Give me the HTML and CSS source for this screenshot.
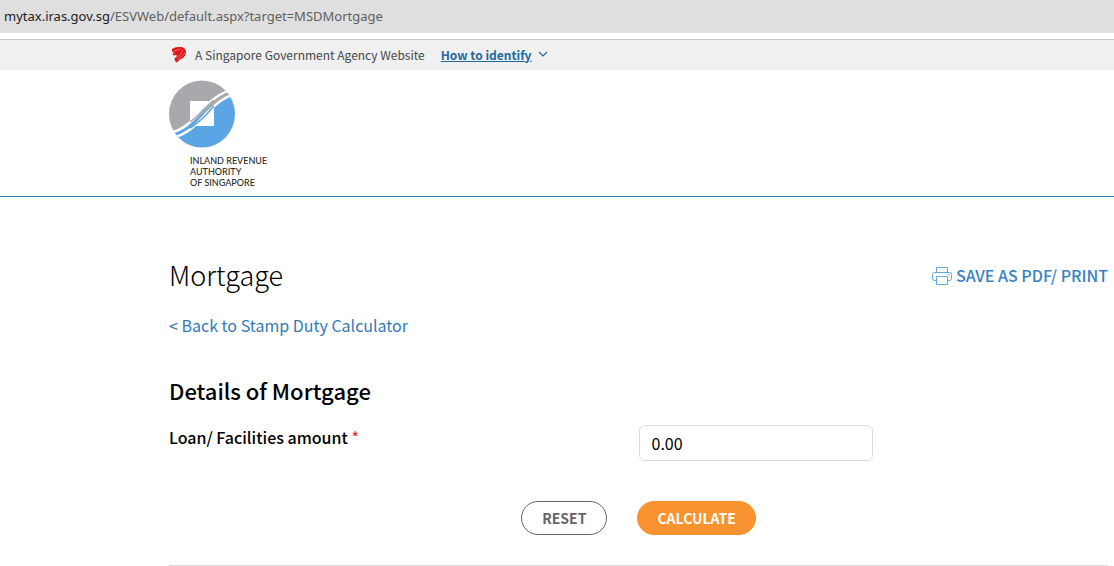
FILE: index.html
```html
<!DOCTYPE html>
<html lang="en">
<head>
<meta charset="utf-8">
<title>Mortgage</title>
<link rel="stylesheet" href="styles.css">
</head>
<body>
<div class="address"><span class="address-host">mytax.iras.gov.sg</span>/ESVWeb/default.aspx?target=MSDMortgage</div>
<div class="masthead">
  <svg class="lion" viewBox="0 0 16 18" aria-hidden="true">
    <path fill="#e3151b" d="M1 4 4 2.500 7 2 11 2 14 4 15 7 14.500 10 12 13 9 14.500 6 17.500 4 16 3.500 13.500 6 11 5 10 2.500 10.500 1.500 9 3 8 1 6.500Z"/>
    <path fill="none" stroke="#f58f8c" stroke-width=".7" d="M2.500 6.500 6 5 10 4M12 5 9.500 9 5.500 13M14 8 11 11 6.500 15"/>
  </svg>
  <span>A Singapore Government Agency Website</span>
  <a class="identify" href="#identify">How to identify</a>
  <svg class="chevron" viewBox="0 0 10 6" aria-hidden="true"><path d="M1 1 5 5 9 1" fill="none" stroke="#1f69a0" stroke-width="1.200"/></svg>
</div>
<header class="header">
  <svg class="emblem" viewBox="0 0 66 68" aria-hidden="true">
    <defs>
      <clipPath id="disc"><ellipse cx="33" cy="34" rx="33" ry="33.500"/></clipPath>
      <linearGradient id="ribbon" gradientUnits="userSpaceOnUse" x1="24" y1="44" x2="44" y2="23"><stop offset="0" stop-color="#5ba5e4"/><stop offset="1" stop-color="#a7a9ac"/></linearGradient>
    </defs>
    <g clip-path="url(#disc)">
      <path fill="#a7a9ac" d="M0 0H70V10C54 14 47 20 36 31C26 42 18 52 -2 57Z"/>
      <path fill="#5ba5e4" d="M70 10C54 14 47 20 36 31C26 42 18 52 -2 57V68H70Z"/>
      <path fill="#fff" d="M21 21H45V46H21Z"/>
      <path fill="none" stroke="#fff" stroke-width="8" d="M70 10C54 14 47 20 36 31C26 42 18 52 -2 57"/>
      <path fill="none" stroke="#a7a9ac" stroke-width="1.500" d="M21 42C27 38 30 34 34 30C38 26 41 23 45 20"/>
      <path fill="none" stroke="#5ba5e4" stroke-width="1.500" d="M21 48C28 44 32 40 37 35C40 32 42 29 45 26"/>
      <path fill="none" stroke="url(#ribbon)" stroke-width="3" d="M70 10C54 14 47 20 36 31C26 42 18 52 -2 57"/>
    </g>
  </svg>
  <div class="agency">INLAND REVENUE<br>AUTHORITY<br>OF SINGAPORE</div>
</header>
<main class="main">
  <div class="title-row">
    <h1 class="title">Mortgage</h1>
    <a class="print" href="#print">
      <svg class="printer" viewBox="0 0 20 18" aria-hidden="true"><path fill="#fff" stroke="#65a9dc" d="M4.500 5.500V.5H15.500V5.500M4.500 13.500H2.500Q.5 13.500 .5 11.500V7.500Q.5 5.500 2.500 5.500H17.500Q19.500 5.500 19.500 7.500V11.500Q19.500 13.500 17.500 13.500H15.500M4.500 9.500H15.500V17.500H4.500ZM16 7.500H17.500"/></svg>
      SAVE AS PDF/ PRINT
    </a>
  </div>
  <a class="back" href="#calculator">&lt; Back to Stamp Duty Calculator</a>
  <h2 class="section">Details of Mortgage</h2>
  <form>
    <div class="field">
      <label class="label" for="amount">Loan/ Facilities amount <span class="required">*</span></label>
      <input class="amount" id="amount" type="text" value="0.00">
    </div>
    <div class="actions">
      <button class="button reset" type="button">RESET</button>
      <button class="button calculate" type="button">CALCULATE</button>
    </div>
  </form>
  <hr class="rule">
</main>
</body>
</html>
```

FILE: styles.css
```css
* { box-sizing: border-box; }
body {
  margin: 0;
  background: #fff;
  color: #000;
  font-family: "Noto Sans CJK SC", "Open Sans", sans-serif;
  font-size: 16px;
}
a { color: #337ab7; text-decoration: none; }
.address {
  height: 33px;
  padding-left: 4px;
  background: #dfdfdf;
  color: #606060;
  font: 13px/33px "Noto Sans", sans-serif;
}
.address-host { color: #202020; }
.masthead {
  display: flex;
  align-items: center;
  height: 31px;
  margin-top: 6px;
  padding: 0 0 2px 171px;
  border-top: 1px solid #c9cccb;
  background: #f0f0f0;
  color: #484848;
  font-size: 12px;
}
.lion { width: 16px; height: 18px; margin-right: 8px; }
.identify {
  margin: 0 6px 0 16px;
  color: #1f69a0;
  font-weight: 700;
  text-decoration: underline;
}
.chevron { width: 10px; height: 6px; }
.header {
  padding: 10px 0 8px 169px;
  border-bottom: 1px solid #2b83c6;
}
.emblem { display: block; width: 66px; height: 68px; }
.agency {
  margin: 7px 0 0 21px;
  color: #2b2b2b;
  font: 500 9px/11px Lato, sans-serif;
}
.main { padding: 58px 6px 0 169px; }
.title-row { display: flex; justify-content: space-between; align-items: center; }
.title { margin: 0; font-size: 27px; font-weight: 300; line-height: 40px; }
.print {
  display: flex;
  align-items: center;
  gap: 4px;
  color: #3783c5;
  font-weight: 500;
  line-height: 24px;
}
.printer { width: 20px; height: 18px; margin-top: 2px; }
.back { display: block; margin-top: 18px; line-height: 24px; }
.section { margin: 35px 0 0; font-size: 22px; font-weight: 500; line-height: 36px; }
.field { display: grid; grid-template-columns: 1fr 1fr; margin-top: 17px; }
.label { font-weight: 500; line-height: 24px; }
.required { color: #f01818; font-weight: 400; }
.amount {
  width: 50%;
  height: 36px;
  padding: 0 12px;
  border: 1px solid #dcdcdc;
  border-radius: 6px;
  font: inherit;
}
.actions { display: flex; justify-content: center; gap: 30px; margin-top: 40px; }
.button {
  height: 34px;
  padding: 0 20px;
  border: 1px solid #f9932f;
  border-radius: 17px;
  font: 700 14px/32px "Noto Sans CJK SC", sans-serif;
}
.reset { border-color: #666; background: #fff; color: #666; }
.calculate { padding: 0 19px; background: #f9932f; color: #fff; }
.rule { margin: 30px 0 0; border: 0; border-top: 1px solid #dcdcdc; }
```
